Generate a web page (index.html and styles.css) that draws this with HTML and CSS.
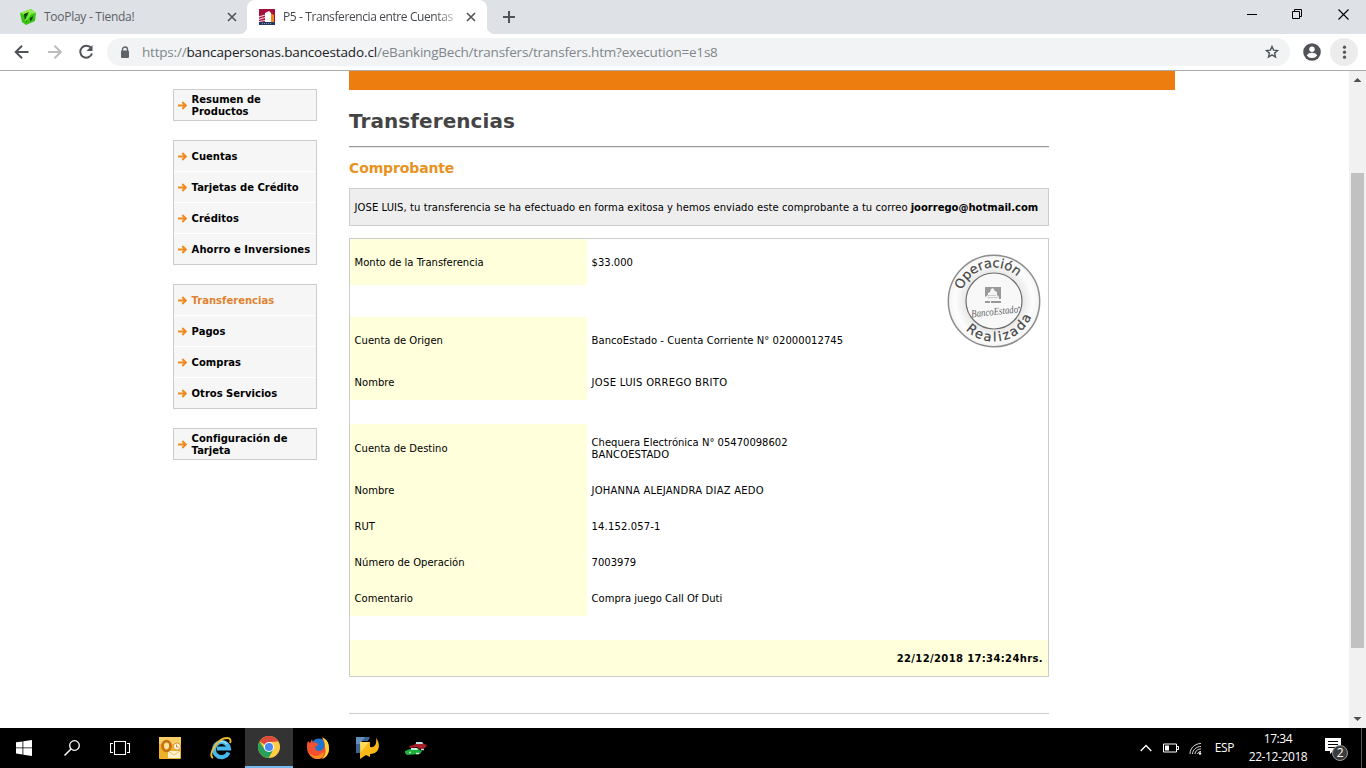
FILE: index.html
```html
<!DOCTYPE html>
<html lang="es">
<head>
<meta charset="utf-8">
<title>P5 - Transferencia entre Cuentas</title>
<link rel="stylesheet" href="styles.css">
</head>
<body>
<svg width="0" height="0" class="defs"><defs>
  <symbol id="arrow" viewBox="0 0 9 9"><path d="M0 4.500h8M4.300 1 7.800 4.500 4.300 8" fill="none" stroke="#f08a1c" stroke-width="1.900"/></symbol>
  <symbol id="close" viewBox="0 0 10 10"><path d="M1 1l8 8M9 1l-8 8" stroke="#505357" stroke-width="1.600"/></symbol>
</defs></svg>
<div class="browser">
  <div class="tabstrip">
    <div class="tab">
      <svg class="favicon" viewBox="0 0 16 16"><path d="M0 4 11 0l5 4-1 8-9 4-4-3z" fill="#39c414"/><path d="M0 4 11 0l5 4-10 2z" fill="#93f04e"/><path d="M4 5l5-2-3 5 1 5-2-1zM10 9l3-2-1 4-2 1z" fill="#123f0a"/><path d="M5 12 12 3" stroke="#7df040" stroke-width="1.600"/></svg>
      <span class="tab-title t1">TooPlay - Tienda!</span>
      <svg class="x" width="10" height="10"><use href="#close"/></svg>
    </div>
    <div class="tab active">
      <svg class="favicon" viewBox="0 0 16 16"><path d="M0 0h16v14H0z" fill="#a3123f"/><path d="M11 4l4 2v8h-4z" fill="#f08518"/><path d="M6 4l4-2 2 2v9H6z" fill="#fff"/><path d="M0 8l6-2M0 10.500l6-2M0 12.500l6-1" stroke="#f5c9d5" stroke-width="1.200"/><path d="M0 13h16v3H0z" fill="#233a66"/><path d="M3 14.500h10" stroke="#8492ad" stroke-dasharray="1 1"/></svg>
      <span class="tab-title t2">P5 - Transferencia entre Cuentas</span>
      <svg class="x" width="10" height="10"><use href="#close"/></svg>
    </div>
    <svg class="plus" width="12" height="12"><path d="M6 0v12M0 6h12" stroke="#505357" stroke-width="2"/></svg>
    <div class="winbtns">
      <svg width="10" height="11"><path d="M0 5.500h10" stroke="#000"/></svg>
      <svg width="11" height="11"><path d="M.5 2.500h7v7h-7zM2.500 2.500v-2h7v7h-2" fill="none" stroke="#000"/></svg>
      <svg width="11" height="11"><path d="M.5.5l10 10M10.500.5l-10 10" stroke="#000" stroke-width="1.100"/></svg>
    </div>
  </div>
  <div class="toolbar">
    <svg class="nav" width="16" height="16"><path d="M14.500 8H2M8 1.700 1.700 8 8 14.300" fill="none" stroke="#505357" stroke-width="2"/></svg>
    <svg class="nav fwd" width="16" height="16"><path d="M1 8h12.500M7.500 1.700 13.800 8l-6.300 6.300" fill="none" stroke="#babcbe" stroke-width="2"/></svg>
    <svg class="nav reload" width="16" height="16"><path d="M13.200 4.200A6 6 0 1 0 14 9.500" fill="none" stroke="#505357" stroke-width="2"/><path d="M14.500 1v6h-6z" fill="#505357"/></svg>
    <div class="omnibox">
      <svg width="10" height="13"><path d="M2.500 5V3.500a2.500 2.500 0 0 1 5 0V5" fill="none" stroke="#5f6368" stroke-width="1.400"/><rect x="1" y="4.500" width="8" height="7.500" rx="1" fill="#5f6368"/></svg>
      <span class="url">https://<b>bancapersonas.bancoestado.cl</b>/eBankingBech/transfers/transfers.htm?execution=e1s8</span>
      <svg class="star" width="14" height="14"><path d="M7 1.500l1.600 3.700 4 .3-3 2.600.9 3.900L7 9.900l-3.500 2.100.9-3.900-3-2.600 4-.3z" fill="none" stroke="#505357" stroke-width="1.400"/></svg>
    </div>
    <svg class="avatar" width="18" height="18"><circle cx="9" cy="9" r="8.800" fill="#505357"/><circle cx="9" cy="6.300" r="2.700" fill="#fff"/><path d="M3.800 12.500c1-2 3-2.700 5.200-2.700s4.200.7 5.200 2.700A6.300 6.300 0 0 1 9 15a6.300 6.300 0 0 1-5.200-2.500z" fill="#fff"/></svg>
    <svg class="dots" width="28" height="28"><circle cx="14" cy="14" r="14" fill="#ececec"/><g fill="#505357"><circle cx="14.500" cy="9.200" r="1.600"/><circle cx="14.500" cy="14.200" r="1.600"/><circle cx="14.500" cy="19.200" r="1.600"/></g></svg>
  </div>
</div>
<div class="viewport">
  <nav class="side">
    <ul><li class="two"><svg><use href="#arrow"/></svg><span>Resumen de<br>Productos</span></li></ul>
    <ul>
      <li><svg><use href="#arrow"/></svg><span>Cuentas</span></li>
      <li><svg><use href="#arrow"/></svg><span>Tarjetas de Crédito</span></li>
      <li><svg><use href="#arrow"/></svg><span>Créditos</span></li>
      <li><svg><use href="#arrow"/></svg><span class="wide">Ahorro e Inversiones</span></li>
    </ul>
    <ul>
      <li class="current"><svg><use href="#arrow"/></svg><span>Transferencias</span></li>
      <li><svg><use href="#arrow"/></svg><span>Pagos</span></li>
      <li><svg><use href="#arrow"/></svg><span>Compras</span></li>
      <li><svg><use href="#arrow"/></svg><span>Otros Servicios</span></li>
    </ul>
    <ul><li class="two"><svg><use href="#arrow"/></svg><span>Configuración de<br>Tarjeta</span></li></ul>
  </nav>
  <main>
    <div class="banner"></div>
    <div class="content">
      <h1>Transferencias</h1>
      <div class="rule"></div>
      <h2>Comprobante</h2>
      <p class="notice"><span>JOSE LUIS, tu transferencia se ha efectuado en forma exitosa y hemos enviado este comprobante a tu correo</span> <b>joorrego@hotmail.com</b></p>
      <section class="receipt">
        <div class="row first"><div>Monto de la Transferencia</div><div>$33.000</div></div>
        <div class="gap32"></div>
        <div class="row origin"><div>Cuenta de Origen</div><div class="account">BancoEstado - Cuenta Corriente N° 02000012745</div></div>
        <div class="row"><div>Nombre</div><div class="payer">JOSE LUIS ORREGO BRITO</div></div>
        <div class="gap24"></div>
        <div class="row dest"><div>Cuenta de Destino</div><div>Chequera Electrónica N° 05470098602<br><span class="bank">BANCOESTADO</span></div></div>
        <div class="row"><div>Nombre</div><div class="payee">JOHANNA ALEJANDRA DIAZ AEDO</div></div>
        <div class="row"><div>RUT</div><div class="rut">14.152.057-1</div></div>
        <div class="row"><div>Número de Operación</div><div>7003979</div></div>
        <div class="row"><div>Comentario</div><div>Compra juego Call Of Duti</div></div>
        <div class="gap24"></div>
        <div class="stamp-date"><span>22/12/2018 17:34:24hrs.</span></div>
        <svg class="seal" width="94" height="94" viewBox="0 0 94 94">
          <defs>
            <radialGradient id="g"><stop offset=".55" stop-color="#e2e2e2"/><stop offset=".85" stop-color="#fdfdfd"/><stop offset="1" stop-color="#f4f4f4"/></radialGradient>
            <path id="top" d="M13.500 47a33.500 33.500 0 0 1 67 0"/>
            <path id="bottom" d="M6.500 47a40.500 40.500 0 0 0 81 0"/>
          </defs>
          <circle cx="47" cy="47" r="45.700" fill="url(#g)" stroke="#8d8d8d" stroke-width="1.500"/>
          <circle cx="47" cy="47" r="28" fill="#f8f8f8" stroke="#6e6e6e" stroke-width="1.200"/>
          <text class="ring"><textPath href="#top" startOffset="11" textLength="67">Operación</textPath></text>
          <text class="ring"><textPath href="#bottom" startOffset="32" textLength="79">Realizada</textPath></text>
          <path d="M38 33h16v12H38z" fill="#999"/><path d="M38 45v-2l3-2v-2l2-1 1-3 2-1 2 3 2 1v3l2 2v2z" fill="#f4f4f4"/><path d="M41 41.500h8M40 43.500h11" stroke="#bbb" stroke-width=".7"/><path d="M38 48h5M44 48h10" stroke="#999" stroke-width="2"/>
          <text class="brand" x="24" y="61" textLength="47" transform="rotate(-6 47 57)" lengthAdjust="spacingAndGlyphs">BancoEstado</text>
          <circle cx="72" cy="53.500" r=".9" fill="#777"/>
        </svg>
      </section>
      <div class="endrule"></div>
    </div>
  </main>
  <div class="scroll">
    <svg width="17" height="17"><path d="M4.500 11l4-4 4 4z" fill="#505050"/></svg>
    <div class="thumb"></div>
    <svg width="17" height="17"><path d="M4.500 6l4 4 4-4z" fill="#505050"/></svg>
  </div>
</div>
<footer class="taskbar">
  <div class="app sys"><svg width="16" height="16"><path d="M0 2.300 6.500 1.400v6.100H0zM7.300 1.200 16 0v7.500H7.300zM0 8.300h6.500v6.200L0 13.600zM7.300 8.300H16V16l-8.700-1.200z" fill="#fff"/></svg></div>
  <div class="app sys"><svg width="16" height="16"><circle cx="10.500" cy="5.500" r="4.800" fill="none" stroke="#fff" stroke-width="1.300"/><path d="M7 9 .5 15.500" stroke="#fff" stroke-width="1.500"/></svg></div>
  <div class="app sys"><svg width="20" height="14"><path d="M4.500.5h11v13h-11zM3 2.500H.5v9H3M17 2.500h2.500v9H17" fill="none" stroke="#fff" stroke-width="1.100"/></svg></div>
  <div class="app mail"><svg width="22" height="22"><rect width="22" height="22" rx="1" fill="#f0b02a"/><path d="M0 0h22v7H0z" fill="#f7cd65"/><path d="M9 14h12v7H9z" fill="#fff4cf"/><path d="M9 14l6 4 6-4" fill="none" stroke="#e8b041" stroke-width=".8"/><ellipse cx="7.500" cy="9" rx="4" ry="4.800" fill="#ffe29a" stroke="#c9710e" stroke-width="2.800"/><circle cx="18" cy="9.500" r="3.600" fill="#fff7df" stroke="#e49728"/><path d="M17.500 7.500v2.500h2" fill="none" stroke="#b96613" stroke-width=".8"/></svg></div>
  <div class="app"><svg width="24" height="24"><path d="M19.500 16.500A7.500 7.500 0 1 1 20 12.500H8" fill="none" stroke="#48b9ee" stroke-width="4"/><path d="M7 8c2-3 8-4 11 0" fill="none" stroke="#b5eaff" stroke-width="1.200"/><path d="M4 22C-2 19 9 2 18 2c4 0 4 3 3 5" fill="none" stroke="#edbd28" stroke-width="1.900"/></svg></div>
  <div class="app on"><svg width="22" height="22"><circle cx="11" cy="11" r="11" fill="#ffcd42"/><path d="M11 11 1.500 5.500A11 11 0 0 1 20.500 5.500L11 6z" fill="#dc4a3d"/><path d="M1.500 5.500A11 11 0 0 0 10.500 22l5-8.500L11 11l-4.600 2z" fill="#27a05a"/><circle cx="11" cy="11" r="5.100" fill="#fff"/><circle cx="11" cy="11" r="4.100" fill="#4a8af4"/></svg></div>
  <div class="app"><svg width="22" height="22"><circle cx="12" cy="10" r="8.500" fill="#1e73cf"/><path d="M1 4l2 2 2-4 1 4c3-1 5 0 5 2l-3 2c0 5 6 5 8 2 3-3 1-8-1-11 6 2 7 7 7 11 0 6-5 10-11 10S0 17 0 11c0-3 0-5 1-7z" fill="#f2502f"/><path d="M15 0c6 3 7 7 7 12 0 5-3 9-7 10 4-4 4-8 3-12 0-4-1-7-3-10z" fill="#ffd43b"/><path d="M2 16c5 4 10 4 14-1 2 3-1 7-5 7s-7-2-9-6z" fill="#fa8f1e"/></svg></div>
  <div class="app"><svg width="24" height="22"><path d="M1 0h14l-2 4H7v12H1z" fill="#3c6590"/><path d="M1 0h9L5 7H1z" fill="#6390ba"/><path d="M5 5h10v5c5 1 7-3 6-9 5 6 4 16-6 16v3l-4-2-6 4z" fill="#f9b818"/><path d="M5 5h9L6 15z" fill="#ffda5c"/></svg></div>
  <div class="app"><svg width="24" height="16"><path d="M5 6l5-1 3-3h5l2 2 3 1-2 3-6 1-2-2-7 1z" fill="#a91f28"/><path d="M12 2h6l1 2h-7z" fill="#b9e3e1"/><path d="M1 11l5-2h4l3-1 3 2 2 1-2 3-13 1-2-2z" fill="#19b23a"/><path d="M7 8h6l1 2H7z" fill="#cbeee1"/><path d="M5 12.500h2M12 13.500h3M17 9.500h3" stroke="#ddd" stroke-width="1.500"/></svg></div>
  <div class="tray">
    <svg class="chev" width="12" height="8"><path d="M.7 7 6 1.500 11.300 7" fill="none" stroke="#fff" stroke-width="1.300"/></svg>
    <svg class="bat" width="16" height="10"><path d="M.5 1h13v8H.5zM14 3.500h1.500v3H14" fill="none" stroke="#fff"/><path d="M2 2.500h4v5H2z" fill="#fff"/></svg>
    <svg class="wifi" width="13" height="13"><g fill="none" stroke="#ddd" stroke-width="1"><path d="M1 12C1 6 6 1.500 12 1.500M3.500 12c0-4 4-7.500 8.500-7.500M6 12c0-3 3-5 6-5M8.500 12c0-1 1-2.500 3.500-2.500"/></g><circle cx="11" cy="11.500" r="1.200" fill="#fff"/></svg>
    <span class="lang">ESP</span>
    <div class="clock"><span>17:34</span><span>22-12-2018</span></div>
    <svg class="note" width="26" height="26"><path d="M1 1h16v13H9l-3 3v-3H1z" fill="#fff"/><path d="M4 4.500h10M4 7.500h10M4 10.500h8" stroke="#000"/><circle cx="16" cy="16" r="7.500" fill="#3b3b3b" stroke="#999"/><text x="16" y="20.300" text-anchor="middle">2</text></svg>
    <i class="peek"></i>
  </div>
</footer>
</body>
</html>
```

FILE: styles.css
```css
* { box-sizing: border-box; }
body { margin: 0; width: 1366px; height: 768px; overflow: hidden; display: flex; flex-direction: column; background: #fff; font-family: "DejaVu Sans", Verdana, sans-serif; font-size: 10px; line-height: 12px; color: #000; }
svg { display: block; flex: none; }
.defs { position: absolute; }
span { white-space: nowrap; }

/* Browser chrome */
.browser { height: 71px; flex: none; border-bottom: 1px solid #aaa; font-family: "Open Sans", "Segoe UI", sans-serif; }
.tabstrip { height: 34px; background: #dee1e6; display: flex; align-items: center; }
.tab { width: 247px; height: 34px; padding: 0 10px 0 20px; display: flex; align-items: center; color: #5d6064; font-size: 12px; letter-spacing: -.27px; }
.tab.active { position: relative; width: 240px; padding: 0 11px 0 12px; background: #fff; border-radius: 8px 8px 0 0; color: #45484c; }
.tab.active::before, .tab.active::after { content: ""; position: absolute; bottom: 0; left: -8px; width: 8px; height: 8px; background: radial-gradient(circle at 0 0, transparent 8px, #fff 8.5px); }
.tab.active::after { left: auto; right: -8px; background: radial-gradient(circle at 100% 0, transparent 8px, #fff 8.5px); }
.favicon { width: 16px; height: 16px; margin-right: 8px; }
.tab-title { line-height: 20px; }
.t2 { width: 172px; letter-spacing: -.4px; -webkit-mask-image: linear-gradient(90deg, #000 152px, rgba(0,0,0,.3) 172px); mask-image: linear-gradient(90deg, #000 152px, rgba(0,0,0,.3) 172px); }
.x { margin-left: auto; }
.plus { margin-left: 16px; }
.winbtns { margin-left: auto; margin-right: 17px; margin-bottom: 6px; display: flex; align-items: center; gap: 35px; }
.toolbar { height: 36px; display: flex; align-items: center; padding: 0 8px 0 14px; }
.fwd { margin-left: 17px; }
.reload { margin-left: 15px; }
.omnibox { width: 1183px; height: 28px; margin-left: 13px; border-radius: 14px; background: #f1f3f4; padding: 0 11px 0 13px; display: flex; align-items: center; }
.url { margin-left: 12px; font-size: 13.5px; letter-spacing: -.2px; line-height: 20px; color: #80868b; }
.url b { font-weight: 400; color: #202124; letter-spacing: -.14px; }
.star { margin-left: auto; }
.avatar { margin-left: 13px; }
.dots { margin-left: 9px; }

/* Page */
.viewport { height: 657px; flex: none; display: flex; }
.side { width: 144px; margin-left: 173px; padding-top: 18px; display: flex; flex-direction: column; gap: 19px; }
.side ul { margin: 0; padding: 0; list-style: none; border: 1px solid #ccc; background: #f6f6f6; }
.side li { height: 31px; display: flex; align-items: center; padding-left: 4px; font-weight: 700; border-bottom: 1px solid #fff; }
.side li:last-child { height: 30px; border: 0; }
.side li svg { width: 9px; height: 9px; margin: 0 4.6px 0 0; }
.side li span { padding-top: 2px; }
.side .wide { letter-spacing: .06px; }
.side .current { color: #e0822e; }
main { width: 826px; margin-left: 32px; }
.banner { height: 19px; background: #ed7d0e; }
.content { width: 700px; }
h1 { margin: 19px 0 0; font-size: 20px; line-height: 24px; letter-spacing: .07px; color: #444; }
.rule { margin-top: 13px; height: 2px; border-top: 1px solid #999; border-bottom: 1px solid #e6e6e6; }
h2 { margin: 11px 0 0; font-size: 14px; line-height: 18px; letter-spacing: -.13px; color: #e8921f; }
.notice { margin: 11px 0 12px; height: 38px; border: 1px solid #ccc; background: #eee; padding: 2px 5px 0 4.6px; display: flex; gap: 3px; align-items: center; white-space: nowrap; }
.notice span { letter-spacing: .065px; }
.receipt { position: relative; border: 1px solid #ccc; height: 439px; }
.row { display: flex; height: 36px; }
.row > div { display: grid; align-content: center; padding: 2px 0 0 4.6px; }
.row > div:first-child { width: 237px; background: #ffffdc; }
.row.first { height: 46px; }
.row.origin { height: 47px; }
.row.origin > div { padding-top: 0; }
.row.dest { height: 48px; }
.gap32 { height: 32px; }
.gap24 { height: 24px; }
.account { letter-spacing: .05px; }
.payer { letter-spacing: .3px; }
.payee { letter-spacing: .21px; }
.bank { letter-spacing: .1px; }
.rut { letter-spacing: .15px; }
.stamp-date { height: 36px; background: #ffffdc; display: flex; align-items: center; justify-content: flex-end; padding: 1px 5px 0 0; font-weight: 700; letter-spacing: .36px; }
.seal { position: absolute; right: 7.5px; top: 14.5px; }
.ring { font-size: 13px; fill: #444; stroke: #444; stroke-width: .2px; }
.brand { font: italic 10.5px "Liberation Serif", serif; fill: #666; }
.endrule { margin-top: 36px; height: 1px; background: #ccc; }
.scroll { width: 17px; margin-left: auto; background: #f1f1f1; display: flex; flex-direction: column; }
.thumb { height: 475px; margin: 85px 2px auto; background: #c1c1c1; }

/* Taskbar */
.taskbar { height: 40px; flex: none; display: flex; background: #000; color: #fff; font-family: "Open Sans", "Segoe UI", sans-serif; font-size: 12px; }
.app { width: 49px; display: flex; align-items: center; justify-content: center; }
.app.sys { width: 48px; }
.app.mail { width: 52px; }
.app.on { width: 48px; background: #333; border-bottom: 2px solid #76b9ed; }
.tray { margin-left: auto; display: flex; align-items: center; letter-spacing: -.4px; }
.bat { margin-left: 11px; }
.wifi { margin-left: 10px; }
.lang { margin-left: 13px; }
.clock { width: 60px; margin-left: 14px; display: flex; flex-direction: column; align-items: center; line-height: 18px; }
.note { margin-left: 16px; margin-top: 4px; font-size: 12px; fill: #fff; }
.peek { width: 1px; height: 40px; background: #555; margin: 0 4px 0 11px; }
```
